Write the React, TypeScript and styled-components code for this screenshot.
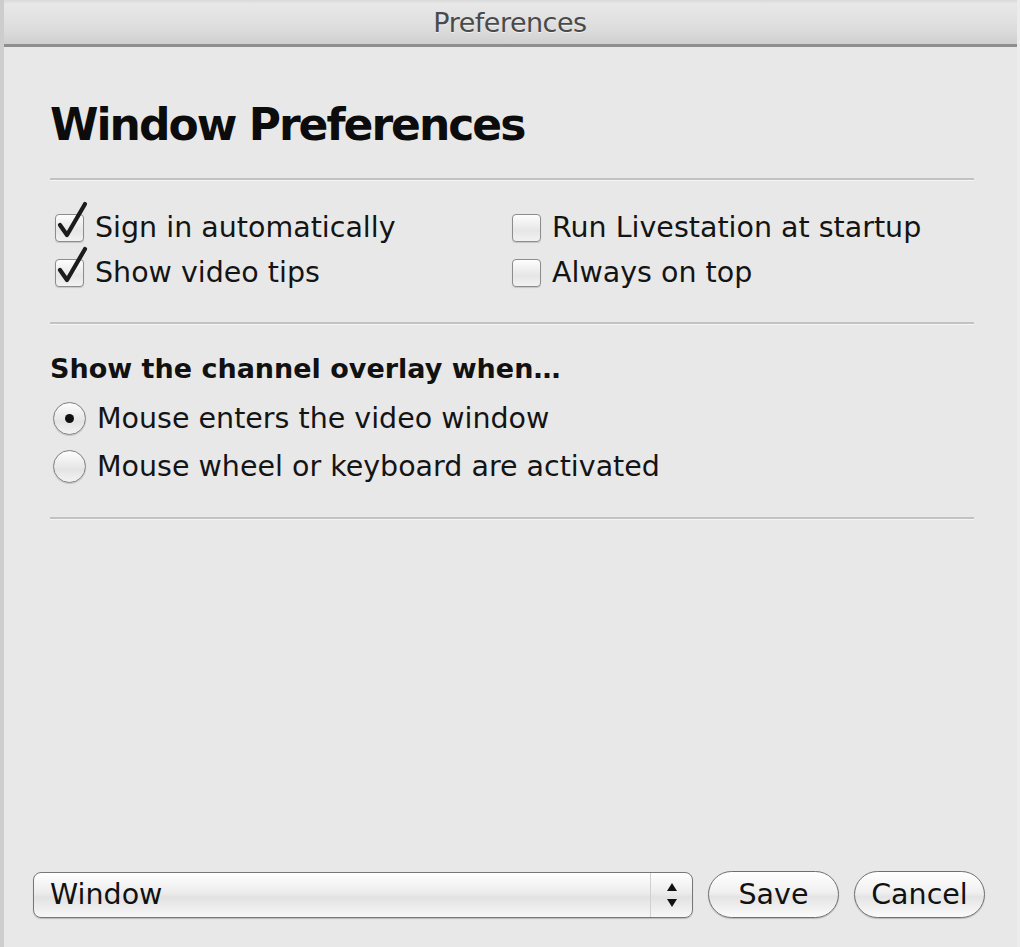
import React, { useState } from "react";
import styled, { createGlobalStyle } from "styled-components";

const GlobalStyle = createGlobalStyle`
  html, body {
    margin: 0;
    padding: 0;
    background: #e8e8e8;
  }
  * {
    box-sizing: border-box;
  }
`;

const checks = [
  { label: "Sign in automatically", on: true },
  { label: "Run Livestation at startup", on: false },
  { label: "Show video tips", on: true },
  { label: "Always on top", on: false },
];

const radios = [
  "Mouse enters the video window",
  "Mouse wheel or keyboard are activated",
];

const App = () => {
  const [opts, setOpts] = useState(checks.map((c) => c.on));
  const [overlay, setOverlay] = useState(0);

  const toggle = (i: number) => {
    setOpts((prev) => prev.map((v, j) => (j === i ? !v : v)));
  };

  return (
    <Window>
      <GlobalStyle />
      <TitleBar>Preferences</TitleBar>
      <Content>
        <Heading>Window Preferences</Heading>
        <Rule />
        <CheckGrid>
          {checks.map((c, i) => (
            <CheckRow key={c.label} onClick={() => toggle(i)}>
              <CheckBox>
                {opts[i] && (
                  <Tick viewBox="0 0 34 42">
                    <path
                      d="M6 25 L13 35 L31 4"
                      fill="none"
                      stroke="#1c1c1c"
                      strokeWidth="4.2"
                      strokeLinecap="round"
                      strokeLinejoin="round"
                    />
                  </Tick>
                )}
              </CheckBox>
              <Label>{c.label}</Label>
            </CheckRow>
          ))}
        </CheckGrid>
        <Rule />
        <SubHeading>Show the channel overlay when…</SubHeading>
        <RadioList>
          {radios.map((r, i) => (
            <RadioRow key={r} onClick={() => setOverlay(i)}>
              <RadioDot selected={overlay === i} />
              <Label>{r}</Label>
            </RadioRow>
          ))}
        </RadioList>
        <Rule />
      </Content>
      <BottomBar>
        <Popup>
          <PopupText>Window</PopupText>
          <Stepper>
            <svg width="14" height="28" viewBox="0 0 14 28">
              <path d="M7 2 L12 10 L2 10 Z" fill="#111" />
              <path d="M7 26 L12 18 L2 18 Z" fill="#111" />
            </svg>
          </Stepper>
        </Popup>
        <PillButton>Save</PillButton>
        <PillButton>Cancel</PillButton>
      </BottomBar>
    </Window>
  );
};

export default App;

const Window = styled.div`
  width: 1020px;
  height: 947px;
  display: flex;
  flex-direction: column;
  background: #e8e8e8;
  border-left: 4px solid #cdcdcd;
  border-right: 3px solid #ececec;
  font-family: "DejaVu Sans", "Liberation Sans", sans-serif;
  color: #111;
  overflow: hidden;
`;

const TitleBar = styled.div`
  height: 47px;
  margin-left: -4px;
  margin-right: -3px;
  display: flex;
  align-items: center;
  justify-content: center;
  font-size: 27px;
  letter-spacing: -0.5px;
  color: #4a4a4a;
  background: linear-gradient(#d9d9d9 0px, #e8e8e8 4px, #dcdcdc 30px, #cfcfcf 44px);
  border-bottom: 3px solid #8e8e8e;
  text-shadow: 0 1px 0 rgba(255, 255, 255, 0.6);
`;

const Content = styled.div`
  flex: 1;
  display: flex;
  flex-direction: column;
  padding: 0 43px 0 46px;
`;

const Heading = styled.h1`
  margin: 52px 0 0 0;
  font-size: 44px;
  line-height: 52px;
  font-weight: bold;
  letter-spacing: -2px;
  color: #0c0c0c;
`;

const Rule = styled.div`
  height: 2px;
  background: #c2c2c2;
  margin-top: 27px;
  box-shadow: 0 1px 0 #f4f4f4;
`;

const CheckGrid = styled.div`
  display: grid;
  grid-template-columns: 457px 1fr;
  margin-top: 25px;
`;

const CheckRow = styled.div`
  height: 45px;
  display: flex;
  align-items: center;
  gap: 11px;
  padding-left: 5px;
  cursor: default;
`;

const CheckBox = styled.div`
  position: relative;
  width: 29px;
  height: 28px;
  border: 1.5px solid #8c8c8c;
  border-radius: 4px;
  background: linear-gradient(#fdfdfd, #e6e6e6 60%, #f2f2f2);
  box-shadow: 0 1px 1px rgba(0, 0, 0, 0.15);
  flex-shrink: 0;
`;

const Tick = styled.svg`
  position: absolute;
  left: -2px;
  top: -15px;
  width: 34px;
  height: 42px;
`;

const Label = styled.span`
  font-size: 28.5px;
  white-space: nowrap;
  color: #141414;
`;

const SubHeading = styled.div`
  margin-top: 25px;
  font-size: 27px;
  line-height: 40px;
  font-weight: bold;
  color: #111;
`;

const RadioList = styled.div`
  display: flex;
  flex-direction: column;
  margin-top: 5px;
`;

const RadioRow = styled.div`
  height: 48px;
  display: flex;
  align-items: center;
  gap: 11px;
  padding-left: 3px;
`;

const RadioDot = styled.div<{ selected: boolean }>`
  position: relative;
  width: 33px;
  height: 33px;
  border-radius: 50%;
  border: 1.5px solid #7e7e7e;
  background: linear-gradient(#fdfdfd, #e4e4e4 60%, #f3f3f3);
  box-shadow: 0 1px 1px rgba(0, 0, 0, 0.15);
  flex-shrink: 0;
  &::after {
    content: "";
    display: ${(p) => (p.selected ? "block" : "none")};
    position: absolute;
    left: 50%;
    top: 50%;
    width: 9px;
    height: 9px;
    margin: -4.5px 0 0 -4.5px;
    border-radius: 50%;
    background: #111;
  }
`;

const BottomBar = styled.div`
  display: flex;
  align-items: center;
  gap: 15px;
  padding: 0 30px 29px 29px;
`;

const Popup = styled.div`
  width: 660px;
  height: 46px;
  display: flex;
  align-items: center;
  border: 1.5px solid #777;
  border-radius: 8px;
  background: linear-gradient(#ffffff, #ececec 45%, #e2e2e2 55%, #f7f7f7);
  box-shadow: 0 1px 1px rgba(0, 0, 0, 0.2);
`;

const PopupText = styled.span`
  flex: 1;
  padding-left: 16px;
  font-size: 28.5px;
  color: #111;
`;

const Stepper = styled.div`
  width: 42px;
  height: 100%;
  display: flex;
  align-items: center;
  justify-content: center;
  border-left: 1px solid #d0d0d0;
`;

const PillButton = styled.button`
  width: 131px;
  height: 47px;
  border: 1.5px solid #6f6f6f;
  border-radius: 24px;
  background: linear-gradient(#ffffff, #f0f0f0 45%, #e4e4e4 55%, #fbfbfb);
  box-shadow: 0 1px 1px rgba(0, 0, 0, 0.2);
  font-family: "DejaVu Sans", "Liberation Sans", sans-serif;
  font-size: 28.5px;
  color: #111;
  padding: 0;
`;
